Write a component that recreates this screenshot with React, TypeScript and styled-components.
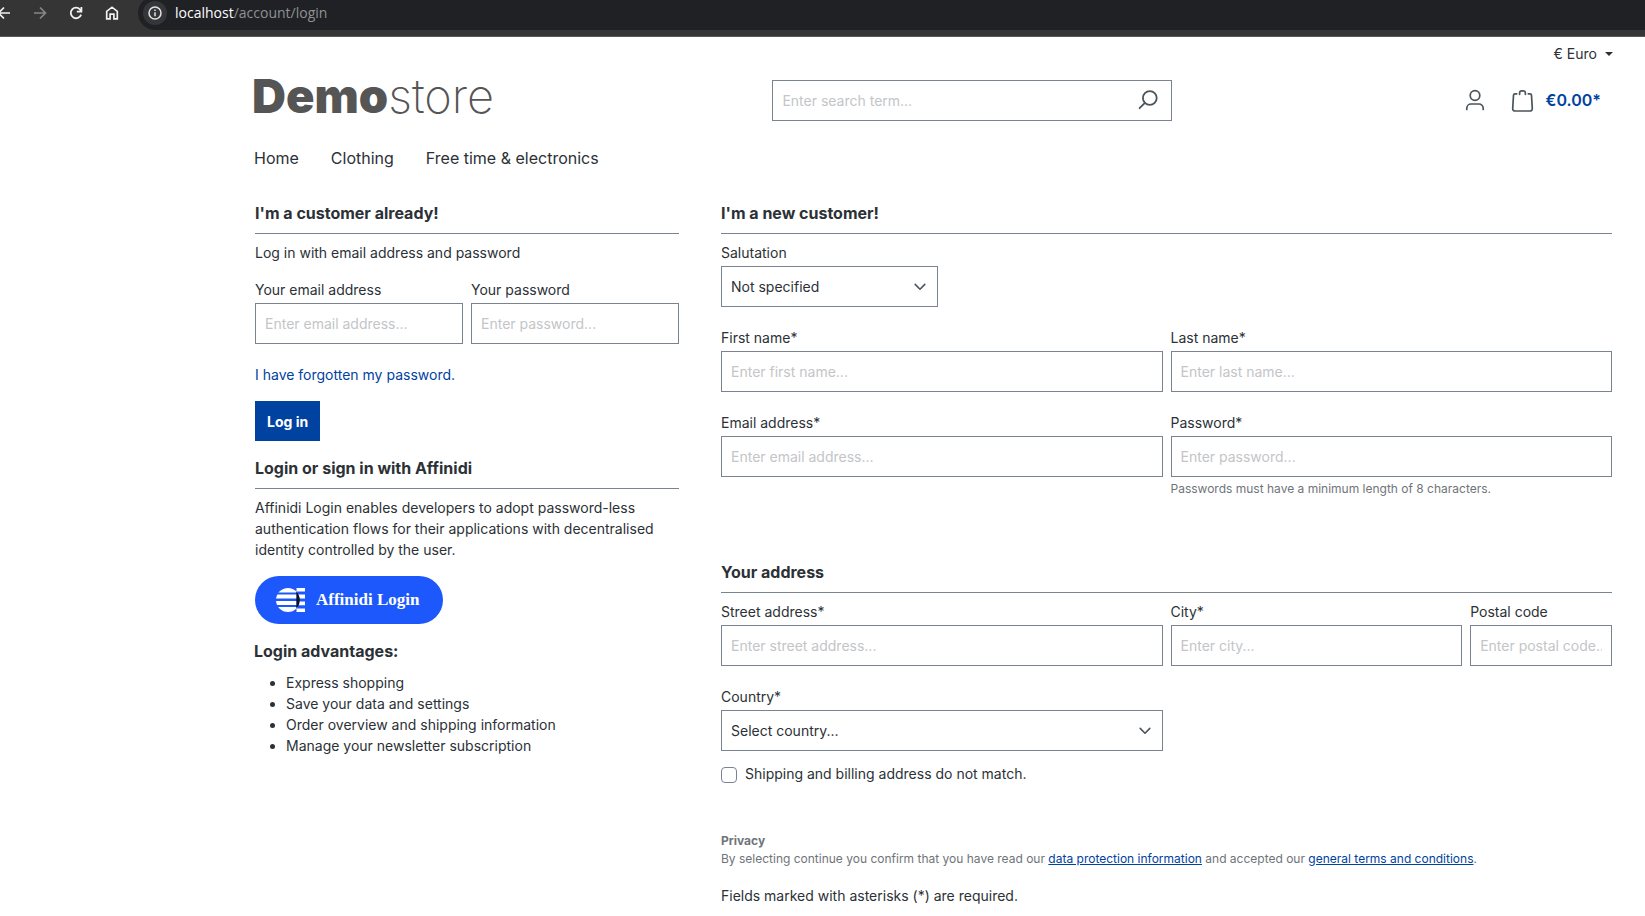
import React from "react";
import styled, { createGlobalStyle } from "styled-components";

const color = {
  text: "#2b3136",
  line: "#798490",
  link: "#0042a0",
  icon: "#4a545b",
  muted: "#6f7479",
  placeholder: "#c3c5c7",
};

const GlobalStyle = createGlobalStyle`
  *, *::before, *::after { box-sizing: border-box; }
  body {
    margin: 0;
    background: #fff;
    color: ${color.text};
    font: 400 14px/21px Inter, "Liberation Sans", sans-serif;
    overflow-x: hidden;
  }
  h1, h2, p, ul { margin: 0; }
  button, input, select { font: inherit; color: inherit; }
  button { cursor: pointer; }
  svg { display: block; flex: none; }
`;

/* Browser toolbar */

const BrowserBar = styled.div`
  display: flex;
  align-items: flex-start;
  height: 37px;
  overflow: hidden;
  background: #353535;
  border-bottom: 1px solid #5a5a5a;
`;

const BrowserButtons = styled.div`
  display: flex;
  margin-left: -14px;
  margin-right: 8px;
`;

const BrowserButton = styled.button<{ $dim?: boolean }>`
  display: flex;
  align-items: center;
  justify-content: center;
  width: 36px;
  height: 26px;
  padding: 0;
  border: 0;
  background: none;
  color: ${(p) => (p.$dim ? "#868686" : "#f1f1f1")};
`;

const AddressBar = styled.div`
  display: flex;
  flex: 1;
  align-items: center;
  gap: 8px;
  height: 34px;
  margin-top: -4px;
  padding-left: 5px;
  border-radius: 17px 0 0 17px;
  background: #202124;
  color: #8f9194;
  font: 400 14px/20px "Open Sans", "Noto Sans", sans-serif;
`;

const SiteInfo = styled.button`
  display: flex;
  align-items: center;
  justify-content: center;
  width: 24px;
  height: 24px;
  padding: 0;
  border: 0;
  border-radius: 12px;
  background: #353639;
  color: #e3e3e3;
`;

const Host = styled.span`
  color: #fff;
`;

/* Shop header */

const Header = styled.header`
  padding: 3px 32px 0 254px;
`;

const TopBar = styled.div`
  display: flex;
  align-items: flex-start;
  justify-content: flex-end;
  height: 28px;
`;

const CurrencyButton = styled.button`
  display: flex;
  align-items: center;
  gap: 8px;
  padding: 3px 0 0;
  border: 0;
  background: none;
`;

const Caret = styled.span`
  border: 4px solid transparent;
  border-top-color: currentColor;
  border-bottom: 0;
`;

const HeaderRow = styled.div`
  display: flex;
  align-items: center;
  height: 64px;
`;

const Logo = styled.a`
  margin: 0 0 8px -2px;
  color: #555;
  font-size: 47px;
  font-weight: 900;
  line-height: 56px;
  text-decoration: none;
`;

const LogoLight = styled.span`
  font-weight: 200;
`;

const SearchForm = styled.form`
  display: flex;
  align-items: center;
  flex: 0 1 400px;
  height: 41px;
  margin: 0 auto;
  border: 1px solid ${color.line};
`;

const SearchInput = styled.input`
  flex: 1;
  min-width: 0;
  padding: 0 9px;
  border: 0;
  outline: 0;
  background: none;
  &::placeholder { color: ${color.placeholder}; opacity: 1; }
`;

const IconButton = styled.button`
  display: flex;
  align-items: center;
  gap: 12px;
  padding: 8px 12px;
  border: 0;
  background: none;
  color: ${color.icon};
`;

const Actions = styled.div`
  display: flex;
`;

const CartTotal = styled.span`
  color: ${color.link};
  font-size: 16px;
  font-weight: 600;
`;

const MainNav = styled.nav`
  display: flex;
  gap: 32px;
  padding: 14px 0;
`;

const NavLink = styled.a`
  color: inherit;
  font-size: 16px;
  line-height: 24px;
  text-decoration: none;
`;

/* Page content */

const Main = styled.main`
  display: grid;
  grid-template-columns: repeat(12, minmax(0, 1fr));
  gap: 40px;
  padding: 17px 33px 8px 254px;
`;

const LoginColumn = styled.div`
  display: flex;
  flex-direction: column;
  grid-column: span 4;
  gap: 15px;
`;

const Card = styled.section`
  padding: 0 1px;
`;

const RegisterForm = styled.form`
  grid-column: span 8;
  padding-left: 1px;
`;

const CardTitle = styled.h2`
  margin-bottom: 8px;
  padding-bottom: 8px;
  border-bottom: 1px solid ${color.line};
  font-size: 16px;
  font-weight: 700;
  line-height: 24px;
`;

const SubTitle = styled.h2`
  margin-bottom: 9px;
  font-size: 16px;
  font-weight: 700;
  line-height: 24px;
`;

const Intro = styled.p`
  margin-bottom: 16px;
`;

const Grid = styled.div`
  display: grid;
  grid-template-columns: repeat(12, minmax(0, 1fr));
  gap: 20px 8px;
`;

const FieldBox = styled.div<{ $span: number }>`
  grid-column: span ${(p) => p.$span};
`;

const Label = styled.label`
  display: block;
  margin-bottom: 3px;
`;

const TextInput = styled.input`
  display: block;
  width: 100%;
  height: 41px;
  padding: 0 9px;
  border: 1px solid ${color.line};
  border-radius: 0;
  background: #fff;
  &::placeholder { color: ${color.placeholder}; opacity: 1; }
`;

const SelectWrap = styled.div`
  display: grid;
  align-items: center;
  > * { grid-area: 1 / 1; }
  > svg { justify-self: end; margin-right: 12px; pointer-events: none; color: ${color.icon}; }
`;

const Select = styled.select`
  width: 100%;
  height: 41px;
  padding: 0 36px 0 9px;
  border: 1px solid ${color.line};
  border-radius: 0;
  background: #fff;
  appearance: none;
`;

const Help = styled.small`
  display: block;
  margin-top: 3px;
  color: ${color.muted};
  font-size: 12px;
  line-height: 18px;
`;

const ForgotLink = styled.a`
  display: block;
  width: fit-content;
  margin: 20px 0 16px;
  color: ${color.link};
  text-decoration: none;
`;

const PrimaryButton = styled.button`
  height: 40px;
  padding: 0 12px;
  border: 0;
  background: ${color.link};
  color: #fff;
  font-weight: 700;
`;

const AffinidiButton = styled.button`
  display: flex;
  align-items: center;
  gap: 11px;
  height: 48px;
  padding: 0 24px 0 21px;
  border: 0;
  border-radius: 24px;
  background: #1d58fc;
  color: #fff;
  font: 700 17px/20px "Liberation Serif", serif;
`;

const AdvantageList = styled.ul`
  padding-left: 32px;
`;

const AddressSection = styled.section`
  margin-top: 62px;
`;

const CheckRow = styled.div`
  display: flex;
  align-items: flex-start;
  gap: 8px;
  margin-top: 12px;
`;

const Checkbox = styled.input`
  flex: none;
  width: 16px;
  height: 16px;
  margin: 4px 0 0;
  border: 1px solid ${color.line};
  border-radius: 4px;
  appearance: none;
`;

const Privacy = styled.div`
  margin: 48px 0 17px;
  color: ${color.muted};
  font-size: 12px;
  line-height: 18px;
`;

const PrivacyTitle = styled.strong`
  display: block;
  font-weight: 700;
`;

const TextLink = styled.a`
  color: ${color.link};
`;

type FieldProps = {
  id: string;
  label: string;
  placeholder: string;
  span: number;
  type?: string;
  help?: string;
};

function Field({ id, label, placeholder, span, type = "text", help }: FieldProps) {
  return (
    <FieldBox $span={span}>
      <Label htmlFor={id}>{label}</Label>
      <TextInput id={id} type={type} placeholder={placeholder} />
      {help && <Help>{help}</Help>}
    </FieldBox>
  );
}

type SelectFieldProps = { id: string; label: string; span: number; options: string[] };

function SelectField({ id, label, span, options }: SelectFieldProps) {
  return (
    <FieldBox $span={span}>
      <Label htmlFor={id}>{label}</Label>
      <SelectWrap>
        <Select id={id}>
          {options.map((o) => (
            <option key={o}>{o}</option>
          ))}
        </Select>
        <svg width="12" height="12" viewBox="0 0 12 12" fill="none" stroke="currentColor" strokeWidth="1.6" strokeLinecap="round" strokeLinejoin="round">
          <path d="M1.2 3.4 6 8.2l4.8-4.8" />
        </svg>
      </SelectWrap>
    </FieldBox>
  );
}

const BackIcon = () => (
  <svg width="16" height="16" viewBox="0 0 16 16" fill="none" stroke="currentColor" strokeWidth="1.7">
    <path d="M14 8H2.8M8 2.5 2.5 8 8 13.5" />
  </svg>
);

const ForwardIcon = () => (
  <svg width="16" height="16" viewBox="0 0 16 16" fill="none" stroke="currentColor" strokeWidth="1.7">
    <path d="M2 8h11.2M8 2.5 13.5 8 8 13.5" />
  </svg>
);

const ReloadIcon = () => (
  <svg width="16" height="16" viewBox="0 0 16 16" fill="none" stroke="currentColor" strokeWidth="1.8">
    <path d="M13.1 9.6A5.3 5.3 0 1 1 12.4 4.9L13 6M13.4 2v4.6H8.8" />
  </svg>
);

const HomeIcon = () => (
  <svg width="16" height="16" viewBox="0 0 16 16" fill="none" stroke="currentColor" strokeWidth="1.7">
    <path d="M2.7 6.3 8 2.2l5.3 4.1v7.5H9.9V9.2H6.1v4.6H2.7z" />
  </svg>
);

const InfoIcon = () => (
  <svg width="14" height="14" viewBox="0 0 14 14" fill="none" stroke="currentColor" strokeWidth="1.5">
    <circle cx="7" cy="7" r="6" />
    <path d="M7 6.2v4M7 3.5v1.5" />
  </svg>
);

const SearchIcon = () => (
  <svg width="22" height="22" viewBox="0 0 22 22" fill="none" stroke="currentColor" strokeWidth="1.8" strokeLinecap="round">
    <circle cx="12.8" cy="9" r="6.9" />
    <path d="m7.9 13.900-5.300 5.300" />
  </svg>
);

const UserIcon = () => (
  <svg width="24" height="24" viewBox="0 0 24 24" fill="none" stroke="currentColor" strokeWidth="1.7" strokeLinecap="round">
    <circle cx="12" cy="7.5" r="4.8" />
    <path d="M3.8 21.5v-1.300a4.200 4.200 0 0 1 4.200-4.200h8a4.200 4.200 0 0 1 4.200 4.200v1.300" />
  </svg>
);

const BagIcon = () => (
  <svg width="23" height="24" viewBox="0 0 23 24" fill="none" stroke="currentColor" strokeWidth="1.7" strokeLinecap="round" strokeLinejoin="round">
    <path d="M5.700 5.800H4a1.500 1.500 0 0 0-1.500 1.400L1.700 20.700a2.200 2.200 0 0 0 2.200 2.300h15.200a2.200 2.200 0 0 0 2.200-2.300L20.500 7.200A1.500 1.500 0 0 0 19 5.800h-1.700" />
    <path d="M8.600 6.300V5a2.200 2.200 0 0 1 2.200-2.200h1.400A2.200 2.200 0 0 1 14.400 5v1.300" />
  </svg>
);

const AffinidiMark = () => (
  <svg width="29" height="24" viewBox="0 0 29 24">
    <defs>
      <clipPath id="disc">
        <circle cx="12" cy="12" r="12" />
      </clipPath>
    </defs>
    <g clipPath="url(#disc)" fill="#fff">
      <path d="M0 0h24v4.600H0zM0 6.600h24v4H0zM0 12.900h24v4.100H0zM0 19h24v5H0z" />
    </g>
    <path d="M20.500 0H29v3.600h-8.500zM20.500 6.600H29v3.800h-8.500zM20.500 13.600H29v3.700h-8.500zM20.500 20.400H29V24h-8.500z" fill="#fff" />
    <path d="M20.300 3.500a12 12 0 0 1 0 17z" fill="#0a1233" />
  </svg>
);

export default function App() {
  return (
    <>
      <GlobalStyle />
      <BrowserBar>
        <BrowserButtons>
          <BrowserButton aria-label="Back"><BackIcon /></BrowserButton>
          <BrowserButton aria-label="Forward" $dim><ForwardIcon /></BrowserButton>
          <BrowserButton aria-label="Reload"><ReloadIcon /></BrowserButton>
          <BrowserButton aria-label="Home"><HomeIcon /></BrowserButton>
        </BrowserButtons>
        <AddressBar>
          <SiteInfo aria-label="Site information"><InfoIcon /></SiteInfo>
          <span><Host>localhost</Host>/account/login</span>
        </AddressBar>
      </BrowserBar>

      <Header>
        <TopBar>
          <CurrencyButton>€ Euro <Caret /></CurrencyButton>
        </TopBar>
        <HeaderRow>
          <Logo href="#">Demo<LogoLight>store</LogoLight></Logo>
          <SearchForm role="search">
            <SearchInput type="text" aria-label="Search" placeholder="Enter search term..." />
            <IconButton type="button" aria-label="Submit search"><SearchIcon /></IconButton>
          </SearchForm>
          <Actions>
            <IconButton aria-label="Your account"><UserIcon /></IconButton>
            <IconButton aria-label="Shopping cart">
              <BagIcon />
              <CartTotal>€0.00*</CartTotal>
            </IconButton>
          </Actions>
        </HeaderRow>
        <MainNav>
          <NavLink href="#">Home</NavLink>
          <NavLink href="#">Clothing</NavLink>
          <NavLink href="#">Free time &amp; electronics</NavLink>
        </MainNav>
      </Header>

      <Main>
        <LoginColumn>
          <Card as="form">
            <CardTitle>I'm a customer already!</CardTitle>
            <Intro>Log in with email address and password</Intro>
            <Grid>
              <Field id="login-email" type="email" label="Your email address" placeholder="Enter email address..." span={6} />
              <Field id="login-password" type="password" label="Your password" placeholder="Enter password..." span={6} />
            </Grid>
            <ForgotLink href="#">I have forgotten my password.</ForgotLink>
            <PrimaryButton type="button">Log in</PrimaryButton>
          </Card>
          <Card>
            <CardTitle>Login or sign in with Affinidi</CardTitle>
            <Intro>
              Affinidi Login enables developers to adopt password-less authentication flows for
              their applications with decentralised identity controlled by the user.
            </Intro>
            <AffinidiButton type="button"><AffinidiMark />Affinidi Login</AffinidiButton>
          </Card>
          <section>
            <SubTitle>Login advantages:</SubTitle>
            <AdvantageList>
              <li>Express shopping</li>
              <li>Save your data and settings</li>
              <li>Order overview and shipping information</li>
              <li>Manage your newsletter subscription</li>
            </AdvantageList>
          </section>
        </LoginColumn>

        <RegisterForm>
          <CardTitle>I'm a new customer!</CardTitle>
          <Grid>
            <SelectField id="salutation" label="Salutation" span={3} options={["Not specified", "Mrs.", "Mr."]} />
            <FieldBox $span={9} />
            <Field id="first-name" label="First name*" placeholder="Enter first name..." span={6} />
            <Field id="last-name" label="Last name*" placeholder="Enter last name..." span={6} />
            <Field id="email" type="email" label="Email address*" placeholder="Enter email address..." span={6} />
            <Field
              id="password"
              type="password"
              label="Password*"
              placeholder="Enter password..."
              span={6}
              help="Passwords must have a minimum length of 8 characters."
            />
          </Grid>
          <AddressSection>
            <CardTitle>Your address</CardTitle>
            <Grid>
              <Field id="street" label="Street address*" placeholder="Enter street address..." span={6} />
              <Field id="city" label="City*" placeholder="Enter city..." span={4} />
              <Field id="postal" label="Postal code" placeholder="Enter postal code..." span={2} />
              <SelectField id="country" label="Country*" span={6} options={["Select country...", "Germany"]} />
            </Grid>
            <CheckRow>
              <Checkbox type="checkbox" id="different-shipping" />
              <label htmlFor="different-shipping">Shipping and billing address do not match.</label>
            </CheckRow>
          </AddressSection>
          <Privacy>
            <PrivacyTitle>Privacy</PrivacyTitle>
            By selecting continue you confirm that you have read our{" "}
            <TextLink href="#">data protection information</TextLink> and accepted our{" "}
            <TextLink href="#">general terms and conditions</TextLink>.
          </Privacy>
          <p>Fields marked with asterisks (*) are required.</p>
        </RegisterForm>
      </Main>
    </>
  );
}
